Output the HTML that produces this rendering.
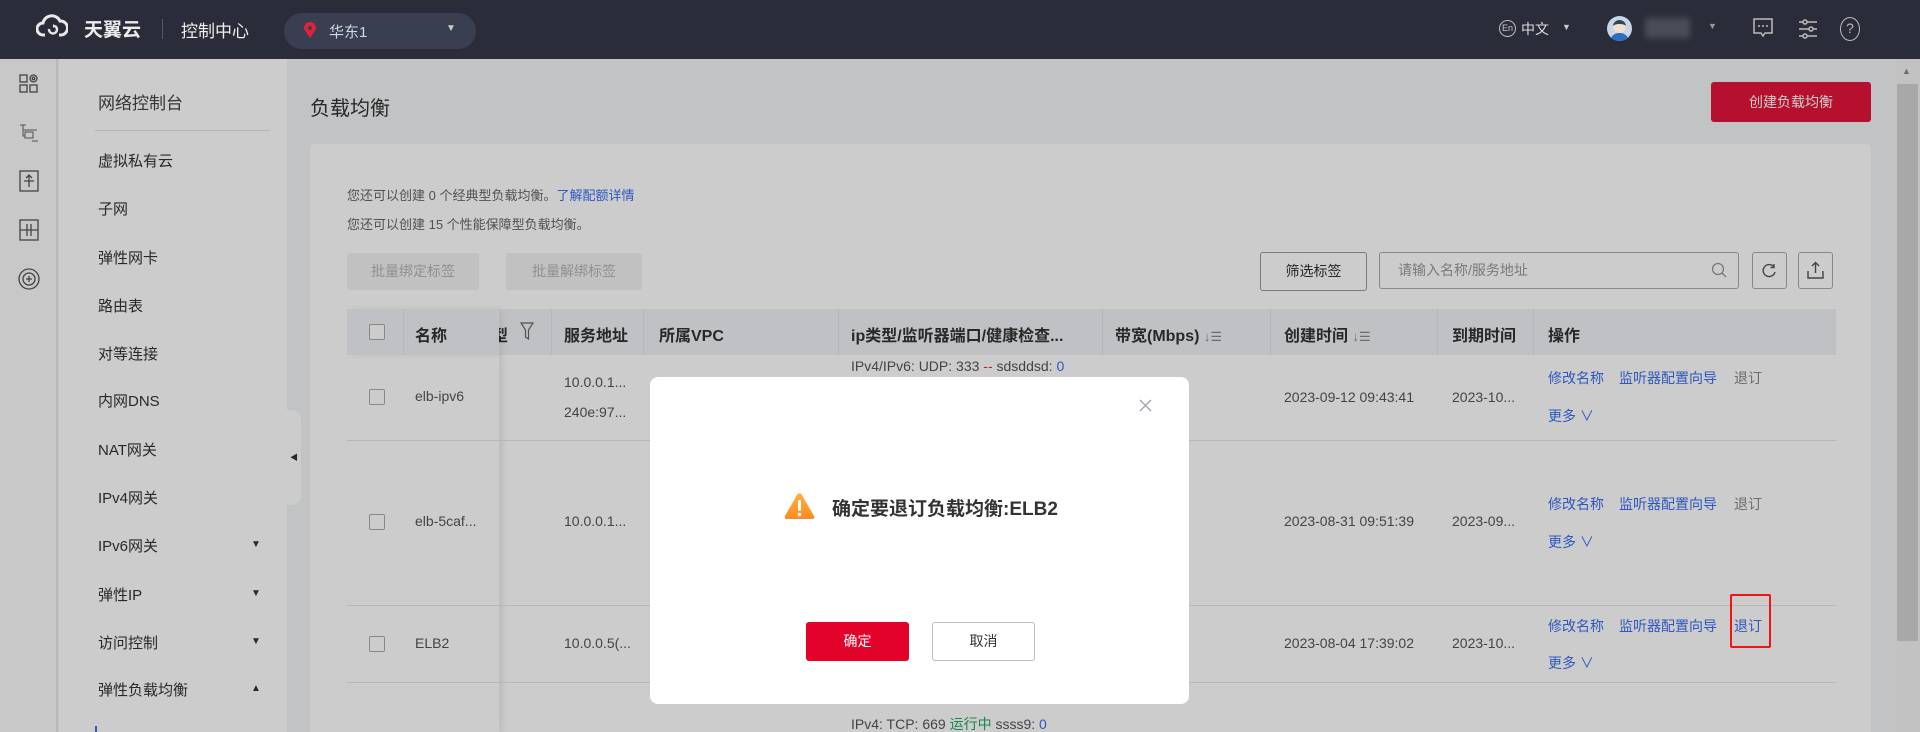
<!DOCTYPE html>
<html style="width:1920px;height:732px;overflow:hidden"><head><meta charset="utf-8"><style>
*{box-sizing:border-box;margin:0;padding:0}
body{width:1920px;height:732px;overflow:hidden;position:relative;background:#f3f4f6;font-family:"Liberation Sans","Noto Sans CJK SC",sans-serif;color:#333}
.a{position:absolute;white-space:nowrap}
.hd{left:0;top:0;width:1920px;height:59px;background:#2a2d39}
.rail{left:0;top:59px;width:58px;height:673px;background:#fbfbfb;border-right:2px solid #e4e6ea}
.side{left:59px;top:59px;width:228px;height:673px;background:#fff}
.mi{left:98px;font-size:15px;color:#333}
.tri{font-size:10px;color:#333}
.card{left:310px;top:144px;width:1561px;height:588px;background:#fff;border-radius:5px 5px 0 0}
.th{font-size:16px;font-weight:bold;color:#333;top:322px}
.cb{width:16px;height:16px;border:1px solid #aaa;border-radius:2px;background:#fff;left:369px}
.lk{color:#3a6ff0}
.td{font-size:14px;color:#555}
.op{font-size:14px}
.ov{left:0;top:59px;width:1920px;height:673px;background:rgba(0,0,0,.2)}
.bl{top:0;width:1px;height:46px;background:#e3e5ea}
.rl{left:347px;width:1489px;height:1px;background:#e3e5ea}
</style></head><body>
<div class="a hd"></div>
<svg class="a" style="left:36px;top:13px" width="32" height="26" viewBox="0 0 32 26"><path d="M9 22H7a6 6 0 0 1 0-12 9 9 0 0 1 17-2 7 7 0 0 1 1 14h-2" fill="none" stroke="#e8e8e8" stroke-width="3"/><path d="M13 16a4 4 0 1 0 6 -3" fill="none" stroke="#e8e8e8" stroke-width="2.5"/><path d="M17 11l3 2-3 2z" fill="#e8e8e8"/></svg>
<div class="a" style="left:84px;top:15px;font-size:19px;color:#ececec;font-weight:bold">天翼云</div>
<div class="a" style="left:162px;top:19px;width:1px;height:20px;background:#555a66"></div>
<div class="a" style="left:181px;top:17px;font-size:17px;color:#eee">控制中心</div>
<div class="a" style="left:284px;top:13px;width:192px;height:36px;border-radius:18px;background:#393e50"></div>
<svg class="a" style="left:304px;top:22px" width="12" height="16" viewBox="0 0 12 16"><path d="M6 16C2 10 0 8 0 6a6 6 0 0 1 12 0c0 2-2 4-6 10z" fill="#e0213a"/><circle cx="6" cy="6" r="2" fill="#393e50"/></svg>
<div class="a" style="left:329px;top:21px;font-size:15px;color:#d5d7de">华东1</div>
<div class="a" style="left:446px;top:23px;font-size:10px;color:#ccc">▼</div>
<div class="a" style="left:1499px;top:20px;width:17px;height:17px;border:1px solid #bbb;border-radius:50%;font-size:9px;color:#ccc;text-align:center;line-height:15px">En</div>
<div class="a" style="left:1521px;top:19px;font-size:14px;color:#ddd">中文</div>
<div class="a" style="left:1562px;top:22px;font-size:9px;color:#ccc">▼</div>
<div class="a" style="left:1607px;top:16px;width:25px;height:25px;border-radius:50%;background:#c9d6e8;overflow:hidden"><div style="position:absolute;left:6px;top:4px;width:13px;height:13px;border-radius:50%;background:#f1e0cf;border-top:4px solid #345"></div><div style="position:absolute;left:3px;top:17px;width:19px;height:10px;border-radius:9px 9px 0 0;background:#2a6fc0"></div></div>
<div class="a" style="left:1645px;top:18px;width:45px;height:20px;background:#4a4d58;filter:blur(3px)"></div>
<div class="a" style="left:1708px;top:21px;font-size:9px;color:#999">▼</div>
<svg class="a" style="left:1753px;top:18px" width="20" height="22" viewBox="0 0 20 22"><path d="M1 1h18v14h-7l-2 3-2-3H1z" fill="none" stroke="#bbb" stroke-width="1.5"/><circle cx="6" cy="8" r="1" fill="#bbb"/><circle cx="10" cy="8" r="1" fill="#bbb"/><circle cx="14" cy="8" r="1" fill="#bbb"/></svg>
<svg class="a" style="left:1798px;top:18px" width="20" height="22" viewBox="0 0 20 22"><g stroke="#bbb" stroke-width="1.5" fill="none"><path d="M1 4h4M9 4h10M1 11h10M15 11h4M1 18h4M9 18h10"/><circle cx="7" cy="4" r="2"/><circle cx="13" cy="11" r="2"/><circle cx="7" cy="18" r="2"/></g></svg>
<div class="a" style="left:1840px;top:17px;width:20px;height:24px;border:1.5px solid #bbb;border-radius:50%;font-size:14px;color:#bbb;text-align:center;line-height:21px">?</div>

<div class="a rail"></div>
<svg class="a" style="left:19px;top:74px" width="20" height="20" viewBox="0 0 20 20" fill="none" stroke="#555" stroke-width="1.3"><rect x="1" y="1" width="7" height="7"/><rect x="1" y="11" width="7" height="7"/><rect x="11" y="11" width="7" height="7"/><circle cx="14.5" cy="4.5" r="3.5"/><circle cx="14.5" cy="4.5" r="1.3"/></svg>
<svg class="a" style="left:19px;top:124px" width="20" height="18" viewBox="0 0 20 18" fill="none" stroke="#666" stroke-width="1"><path d="M1 1h6M4 1v5h14M4 6v6h2M13 17h6"/><rect x="6" y="8" width="8" height="6"/></svg>
<svg class="a" style="left:19px;top:170px" width="20" height="22" viewBox="0 0 20 22" fill="none" stroke="#555" stroke-width="1.3"><rect x="1" y="1" width="18" height="20"/><path d="M5 11h10M10 5v12M7 8l3-3 3 3"/></svg>
<svg class="a" style="left:19px;top:219px" width="20" height="22" viewBox="0 0 20 22" fill="none" stroke="#555" stroke-width="1.3"><rect x="1" y="1" width="18" height="20"/><path d="M1 11h18M8 5v12M12 5v12"/></svg>
<svg class="a" style="left:18px;top:268px" width="22" height="22" viewBox="0 0 22 22" fill="none" stroke="#555" stroke-width="1.3"><circle cx="11" cy="11" r="10"/><circle cx="11" cy="11" r="6"/><path d="M8 11h6M11 8v6"/></svg>

<div class="a side"></div>
<div class="a" style="left:98px;top:89px;font-size:17px;color:#444">网络控制台</div>
<div class="a" style="left:95px;top:130px;width:174px;height:1px;background:#e0e2e8"></div>
<div class="a mi" style="top:150px">虚拟私有云</div>
<div class="a mi" style="top:198px">子网</div>
<div class="a mi" style="top:247px">弹性网卡</div>
<div class="a mi" style="top:295px">路由表</div>
<div class="a mi" style="top:343px">对等连接</div>
<div class="a mi" style="top:390px">内网DNS</div>
<div class="a mi" style="top:439px">NAT网关</div>
<div class="a mi" style="top:487px">IPv4网关</div>
<div class="a mi" style="top:535px">IPv6网关</div><div class="a tri" style="left:251px;top:539px">▼</div>
<div class="a mi" style="top:584px">弹性IP</div><div class="a tri" style="left:251px;top:588px">▼</div>
<div class="a mi" style="top:632px">访问控制</div><div class="a tri" style="left:251px;top:636px">▼</div>
<div class="a mi" style="top:679px">弹性负载均衡</div><div class="a tri" style="left:251px;top:683px">▲</div>
<div class="a" style="left:95px;top:726px;width:2px;height:6px;background:#3a6ff0"></div>
<div class="a" style="left:287px;top:410px;width:14px;height:95px;background:#fff;border-radius:0 10px 10px 0"></div>
<div class="a" style="left:290px;top:452px;font-size:8px;color:#333">◀</div>

<div class="a" style="left:310px;top:92px;font-size:20px;color:#333">负载均衡</div>
<div class="a" style="left:1711px;top:82px;width:160px;height:40px;background:#e3163a;border-radius:3px;color:#fff;font-size:14px;text-align:center;line-height:40px">创建负载均衡</div>
<div class="a card"></div>
<div class="a" style="left:347px;top:185px;font-size:13px;color:#666">您还可以创建 0 个经典型负载均衡。<span class="lk">了解配额详情</span></div>
<div class="a" style="left:347px;top:214px;font-size:13px;color:#666">您还可以创建 15 个性能保障型负载均衡。</div>
<div class="a" style="left:347px;top:253px;width:132px;height:37px;background:#f2f2f3;border-radius:3px;color:#b5b5b5;font-size:14px;text-align:center;line-height:37px">批量绑定标签</div>
<div class="a" style="left:506px;top:253px;width:136px;height:37px;background:#f2f2f3;border-radius:3px;color:#b5b5b5;font-size:14px;text-align:center;line-height:37px">批量解绑标签</div>
<div class="a" style="left:1260px;top:252px;width:107px;height:39px;border:1px solid #999;border-radius:3px;font-size:14px;text-align:center;line-height:37px;color:#333">筛选标签</div>
<div class="a" style="left:1379px;top:252px;width:360px;height:37px;border:1px solid #aaa;border-radius:3px;font-size:14px;line-height:35px;padding-left:18px;color:#999">请输入名称/服务地址</div>
<svg class="a" style="left:1711px;top:262px" width="16" height="17" viewBox="0 0 16 17" fill="none" stroke="#999" stroke-width="1.3"><circle cx="7" cy="7" r="5.5"/><path d="M11 11l4 4"/></svg>
<div class="a" style="left:1752px;top:252px;width:35px;height:37px;border:1px solid #aaa;border-radius:3px"></div>
<svg class="a" style="left:1762px;top:263px" width="15" height="15" viewBox="0 0 15 15" fill="none" stroke="#555" stroke-width="1.4"><path d="M12 4A6 6 0 1 0 13 9"/><path d="M12 1v3.5H8.5"/></svg>
<div class="a" style="left:1798px;top:252px;width:35px;height:37px;border:1px solid #aaa;border-radius:3px"></div>
<svg class="a" style="left:1807px;top:261px" width="17" height="18" viewBox="0 0 17 18" fill="none" stroke="#555" stroke-width="1.4"><path d="M8.5 12V2M5 5l3.5-3.5L12 5M1 10v7h15v-7"/></svg>

<div class="a" style="left:347px;top:309px;width:1489px;height:46px;background:#f0f2f6">
<div class="a bl" style="left:56px"></div><div class="a bl" style="left:204px"></div><div class="a bl" style="left:296px"></div><div class="a bl" style="left:491px"></div><div class="a bl" style="left:755px"></div><div class="a bl" style="left:923px"></div><div class="a bl" style="left:1090px"></div><div class="a bl" style="left:1186px"></div>
</div>
<div class="a th" style="left:492px">型</div>
<svg class="a" style="left:520px;top:322px" width="14" height="18" viewBox="0 0 14 18" fill="none" stroke="#666" stroke-width="1.2"><path d="M1 1h12L8.5 8v9L5.5 15V8z"/></svg>
<div class="a th" style="left:564px">服务地址</div>
<div class="a th" style="left:659px">所属VPC</div>
<div class="a th" style="left:851px">ip类型/监听器端口/健康检查...</div>
<div class="a th" style="left:1115px">带宽(Mbps) <span style="font-weight:normal;color:#888;font-size:13px">↓☰</span></div>
<div class="a th" style="left:1284px">创建时间 <span style="font-weight:normal;color:#888;font-size:13px">↓☰</span></div>
<div class="a th" style="left:1452px">到期时间</div>
<div class="a th" style="left:1548px">操作</div>
<div class="a" style="left:347px;top:355px;width:152px;height:377px;background:#fff;box-shadow:4px 0 6px rgba(0,0,0,.08)"></div>
<div class="a" style="left:347px;top:309px;width:152px;height:46px;background:#f0f2f6;box-shadow:4px 0 6px rgba(0,0,0,.06)"></div>
<div class="a cb" style="top:324px"></div>
<div class="a th" style="left:415px">名称</div>
<div class="a bl" style="left:403px;top:309px;height:46px"></div>
<div class="a rl" style="top:440px"></div><div class="a rl" style="top:605px"></div><div class="a rl" style="top:682px"></div>
<div class="a cb" style="top:389px"></div><div class="a td lk" style="left:415px;top:388px">elb-ipv6</div>
<div class="a td" style="left:564px;top:374px">10.0.0.1...</div><div class="a td" style="left:564px;top:404px">240e:97...</div>
<div class="a td" style="left:851px;top:358px">IPv4/IPv6: UDP: 333 <span style="color:#e33">--</span> sdsddsd: <span class="lk">0</span></div>
<div class="a td" style="left:1284px;top:389px">2023-09-12 09:43:41</div><div class="a td" style="left:1452px;top:389px">2023-10...</div>
<div class="a op lk" style="left:1548px;top:368px">修改名称</div><div class="a op lk" style="left:1619px;top:368px">监听器配置向导</div><div class="a op" style="left:1734px;top:368px;color:#888">退订</div>
<div class="a op lk" style="left:1548px;top:406px">更多 ∨</div>

<div class="a cb" style="top:514px"></div><div class="a td lk" style="left:415px;top:513px">elb-5caf...</div>
<div class="a td" style="left:564px;top:513px">10.0.0.1...</div>
<div class="a td" style="left:1284px;top:513px">2023-08-31 09:51:39</div><div class="a td" style="left:1452px;top:513px">2023-09...</div>
<div class="a op lk" style="left:1548px;top:494px">修改名称</div><div class="a op lk" style="left:1619px;top:494px">监听器配置向导</div><div class="a op" style="left:1734px;top:494px;color:#888">退订</div>
<div class="a op lk" style="left:1548px;top:532px">更多 ∨</div>

<div class="a cb" style="top:636px"></div><div class="a td lk" style="left:415px;top:635px">ELB2</div>
<div class="a td" style="left:564px;top:635px">10.0.0.5(...</div>
<div class="a td" style="left:1284px;top:635px">2023-08-04 17:39:02</div><div class="a td" style="left:1452px;top:635px">2023-10...</div>
<div class="a op lk" style="left:1548px;top:616px">修改名称</div><div class="a op lk" style="left:1619px;top:616px">监听器配置向导</div><div class="a op lk" style="left:1734px;top:616px">退订</div>
<div class="a op lk" style="left:1548px;top:653px">更多 ∨</div>
<div class="a td" style="left:851px;top:714px">IPv4: TCP: 669 <span style="color:#1eaa5a">运行中</span> ssss9: <span class="lk">0</span></div>
<div class="a" style="left:1896px;top:59px;width:24px;height:673px;background:#f3f3f3"></div>
<div class="a" style="left:1897px;top:84px;width:21px;height:557px;background:#d3d3d3"></div>
<div class="a" style="left:1902px;top:66px;font-size:9px;color:#888">▲</div>

<div class="a ov"></div>
<div class="a" style="left:1730px;top:594px;width:41px;height:54px;border:2px solid #f01414;border-radius:2px"></div>
<div class="a" style="left:650px;top:377px;width:539px;height:327px;background:#fff;border-radius:8px"></div>
<svg class="a" style="left:1139px;top:399px" width="13" height="13" viewBox="0 0 13 13" stroke="#9aa0a8" stroke-width="1.3"><path d="M1 1l11 11M12 1L1 12"/></svg>
<svg class="a" style="left:784px;top:492px" width="31" height="28" viewBox="0 0 31 28"><defs><linearGradient id="g" x1="0" y1="0" x2="0" y2="1"><stop offset="0" stop-color="#ffb13b"/><stop offset="1" stop-color="#ff8a24"/></linearGradient></defs><path d="M15.5 1.5Q17 1 18 3L30 24Q31 27 28 27H3Q0 27 1 24L13 3Q14 1 15.5 1.5z" fill="url(#g)"/><rect x="14" y="8" width="3" height="11" rx="1.5" fill="#fff"/><circle cx="15.5" cy="22.5" r="1.8" fill="#fff"/></svg>
<div class="a" style="left:832px;top:494px;font-size:19px;font-weight:bold;color:#333">确定要退订负载均衡:ELB2</div>
<div class="a" style="left:806px;top:622px;width:103px;height:39px;background:#e3032a;border-radius:3px;color:#fff;font-size:14px;text-align:center;line-height:39px">确定</div>
<div class="a" style="left:932px;top:622px;width:103px;height:39px;border:1px solid #bbb;border-radius:3px;color:#333;font-size:14px;text-align:center;line-height:37px">取消</div>
</body></html>
